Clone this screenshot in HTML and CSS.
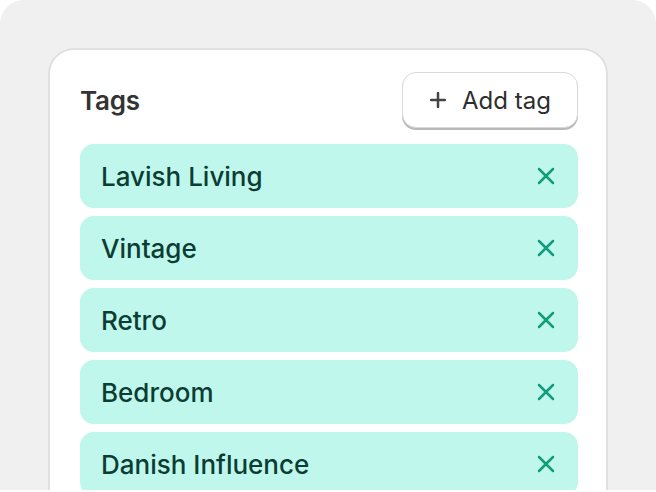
FILE: index.html
```html
<!DOCTYPE html>
<html>
<head>
<meta charset="utf-8">
<link rel="stylesheet" href="styles.css">
</head>
<body>
<div class="stage">
  <section class="card">
    <header class="card-head">
      <h2 class="title">Tags</h2>
      <button class="add-btn">
        <svg class="plus" viewBox="0 0 16 16" width="16" height="16"><path d="M8 1v14M1 8h14" stroke="currentColor" stroke-width="2.5" stroke-linecap="round" fill="none"/></svg>
        <span>Add tag</span>
      </button>
    </header>
    <ul class="tags">
      <li class="tag"><span>Lavish Living</span><svg class="x" viewBox="0 0 18 18" width="18" height="18"><path d="M2 2l14 14M16 2L2 16" stroke="currentColor" stroke-width="2.5" stroke-linecap="round" fill="none"/></svg></li>
      <li class="tag"><span>Vintage</span><svg class="x" viewBox="0 0 18 18" width="18" height="18"><path d="M2 2l14 14M16 2L2 16" stroke="currentColor" stroke-width="2.5" stroke-linecap="round" fill="none"/></svg></li>
      <li class="tag"><span>Retro</span><svg class="x" viewBox="0 0 18 18" width="18" height="18"><path d="M2 2l14 14M16 2L2 16" stroke="currentColor" stroke-width="2.5" stroke-linecap="round" fill="none"/></svg></li>
      <li class="tag"><span>Bedroom</span><svg class="x" viewBox="0 0 18 18" width="18" height="18"><path d="M2 2l14 14M16 2L2 16" stroke="currentColor" stroke-width="2.5" stroke-linecap="round" fill="none"/></svg></li>
      <li class="tag"><span>Danish Influence</span><svg class="x" viewBox="0 0 18 18" width="18" height="18"><path d="M2 2l14 14M16 2L2 16" stroke="currentColor" stroke-width="2.5" stroke-linecap="round" fill="none"/></svg></li>
    </ul>
  </section>
</div>
</body>
</html>
```
FILE: styles.css
```css
html, body {
  margin: 0;
  padding: 0;
  background: #ffffff;
  font-family: Inter, "Liberation Sans", sans-serif;
}
.stage {
  width: 656px;
  height: 490px;
  background: #f0f0f0;
  border-radius: 24px 24px 0 0;
  overflow: hidden;
  padding: 48px 48px 0;
  box-sizing: border-box;
}
.card {
  background: #ffffff;
  border: 2px solid #e0e0e0;
  border-radius: 26px;
  padding: 22px 28px 30px 30px;
  box-sizing: border-box;
}
.card-head {
  display: flex;
  align-items: center;
  justify-content: space-between;
  margin-bottom: 16px;
}
.title {
  margin: 0;
  font-size: 26px;
  font-weight: 600;
  color: #333333;
  letter-spacing: -0.2px;
}
.add-btn {
  display: flex;
  align-items: center;
  gap: 16px;
  width: 176px;
  height: 56px;
  padding: 0 0 0 27px;
  box-sizing: border-box;
  background: #ffffff;
  border: 1px solid #d9d9d9;
  border-radius: 14px;
  box-shadow: 0 2px 0 #b9b9b9;
  font-family: inherit;
  font-size: 24px;
  font-weight: 400;
  color: #2e2e2e;
}
.plus {
  color: #444444;
}
.tags {
  list-style: none;
  margin: 0;
  padding: 0;
  display: flex;
  flex-direction: column;
  gap: 8px;
}
.tag {
  display: flex;
  align-items: center;
  justify-content: space-between;
  height: 64px;
  padding: 0 23px 0 21px;
  background: #bff7ed;
  border-radius: 14px;
  font-size: 26px;
  font-weight: 500;
  color: #0c3d33;
}
.x {
  color: #139c7b;
  width: 18px;
  height: 18px;
}
```
